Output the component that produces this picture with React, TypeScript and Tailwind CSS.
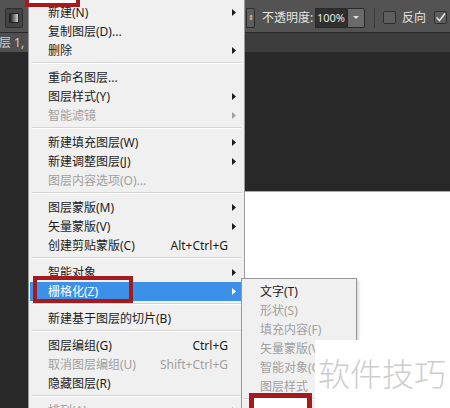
import React from 'react';

type Item =
  | 'sep'
  | { label: string; keys?: string; sub?: boolean; off?: boolean; active?: boolean };

const layerMenu: Item[] = [
  { label: '新建(N)', sub: true },
  { label: '复制图层(D)...' },
  { label: '删除', sub: true },
  'sep',
  { label: '重命名图层...' },
  { label: '图层样式(Y)', sub: true },
  { label: '智能滤镜', sub: true, off: true },
  'sep',
  { label: '新建填充图层(W)', sub: true },
  { label: '新建调整图层(J)', sub: true },
  { label: '图层内容选项(O)...', off: true },
  'sep',
  { label: '图层蒙版(M)', sub: true },
  { label: '矢量蒙版(V)', sub: true },
  { label: '创建剪贴蒙版(C)', keys: 'Alt+Ctrl+G' },
  'sep',
  { label: '智能对象', sub: true },
  { label: '栅格化(Z)', sub: true, active: true },
  'sep',
  { label: '新建基于图层的切片(B)' },
  'sep',
  { label: '图层编组(G)', keys: 'Ctrl+G' },
  { label: '取消图层编组(U)', keys: 'Shift+Ctrl+G', off: true },
  { label: '隐藏图层(R)' },
  'sep',
  { label: '排列(A)', sub: true, off: true },
];

const rasterMenu: Item[] = [
  { label: '文字(T)' },
  { label: '形状(S)', off: true },
  { label: '填充内容(F)', off: true },
  { label: '矢量蒙版(V)', off: true },
  { label: '智能对象(O)', off: true },
  { label: '图层样式', off: true },
  'sep',
  { label: '图层(L)' },
];

const Arrow = () => (
  <svg width="4" height="7" viewBox="0 0 4 7" className="block">
    <polygon points="0,0 4,3.5 0,7" fill="currentColor" />
  </svg>
);

const MenuRows = ({ items }: { items: Item[] }) => (
  <>
    {items.map((item, i) =>
      item === 'sep' ? (
        <div key={i} className="h-[8px] px-[2px] pt-[2px]">
          <div className="h-px bg-[#d4d4d4]" />
          <div className="h-px bg-white" />
        </div>
      ) : (
        <div
          key={i}
          className={`flex h-[19px] items-center pl-[18px] ${
            item.active ? 'bg-[#3c90e8] text-white' : item.off ? 'text-[#a0a0a0]' : 'text-[#1c1c1c]'
          }`}
        >
          <span className="flex-1 whitespace-nowrap">{item.label}</span>
          {item.keys && <span className="whitespace-nowrap">{item.keys}</span>}
          <span className="w-[15px] pl-[4px]">{item.sub && <Arrow />}</span>
        </div>
      )
    )}
  </>
);

const Checkbox = ({ checked }: { checked?: boolean }) => (
  <div className="flex h-[13px] w-[13px] items-center justify-center rounded-[2px] border border-[#2e2e2e] bg-[#5e5e5e]">
    {checked && (
      <svg width="11" height="11" viewBox="0 0 11 11">
        <path d="M1.5 5.5 L4.5 8.5 L10 1.5" stroke="#e8e8e8" strokeWidth="1.5" fill="none" />
      </svg>
    )}
  </div>
);

export default function App() {
  return (
    <div className="relative h-[408px] w-[450px] overflow-hidden bg-[#282828] font-['Noto_Sans','Noto_Sans_CJK_SC',sans-serif] text-[12px] leading-none">
      {/* Options bar */}
      <div className="flex h-[33px] items-center border-b border-[#2a2a2a] bg-[#535353] pt-[3px]">
        <div className="ml-[5px] flex h-[20px] w-[18px] items-center justify-center rounded-[2px] border border-[#2c2c2c] bg-[#444]">
          <div className="h-[10px] w-[10px] border border-[#222] bg-gradient-to-r from-[#1e1e1e] to-[#d8d8d8]" />
        </div>
        <div className="ml-[223px] flex h-[20px] w-[9px] items-center justify-center rounded-r-[2px] border border-[#2c2c2c] bg-[#5c5c5c] text-[7px] text-[#ddd]">
          ⇕
        </div>
        <span className="ml-[7px] w-[52px] whitespace-nowrap text-[#e4e4e4]">不透明度:</span>
        <div className="ml-[1px] flex h-[20px] w-[32px] items-center justify-center border border-[#2a2a2a] bg-[#2f2f2f] text-[11px] text-[#e6e6e6]">
          100%
        </div>
        <div className="flex h-[20px] w-[18px] items-center justify-center rounded-r-[2px] border border-[#2a2a2a] bg-[#6a6a6a]">
          <div className="h-0 w-0 border-x-[3px] border-t-[3px] border-x-transparent border-t-[#e0e0e0]" />
        </div>
        <div className="ml-[9px] h-[20px] w-px bg-[#3a3a3a]" />
        <div className="ml-[8px]">
          <Checkbox />
        </div>
        <span className="ml-[6px] w-[24px] whitespace-nowrap text-[#e4e4e4]">反向</span>
        <div className="ml-[8px]">
          <Checkbox checked />
        </div>
      </div>

      {/* Document tab row */}
      <div className="flex h-[19px] bg-[#3c3c3c]">
        <div className="flex w-[28px] items-center overflow-hidden bg-[#4f4f4f]">
          <span className="ml-[-13px] whitespace-nowrap text-[#cfcfcf]">图层 1, RGB/8</span>
        </div>
      </div>

      {/* Canvas area */}
      <div className="flex h-[356px]">
        <div className="w-[28px] bg-[#282828]" />
        <div className="flex flex-1 flex-col">
          <div className="h-[139px] bg-[#282828]" />
          <div className="h-px bg-[#a8a8a8]" />
          <div className="flex-1 bg-white" />
        </div>
      </div>

      {/* Layer menu */}
      <div className="absolute left-[28px] top-0 w-[217px] border-x border-[#9a9a9a] bg-[#f0f0f0] px-[1px] pb-[3px] pt-[3px]">
        <MenuRows items={layerMenu} />
      </div>

      {/* Rasterize submenu */}
      <div className="absolute left-[241px] top-[278px] w-[116px] border border-[#979797] bg-[#f0f0f0] py-[3px] shadow-[2px_2px_2px_rgba(0,0,0,0.15)]">
        <MenuRows items={rasterMenu} />
      </div>

      {/* Watermark */}
      <div className="absolute left-[315px] top-[340px] h-[68px] w-[135px] bg-white pl-[3px] pt-[18px]">
        <span className="whitespace-nowrap text-[32px] font-extralight text-[#cdcdcd]">软件技巧</span>
      </div>

      {/* Callout boxes */}
      <div className="absolute left-[25px] top-[-13px] h-[20px] w-[55px] border-[4px] border-[#a51a1c] bg-white" />
      <div className="absolute left-[33px] top-[276px] h-[27px] w-[100px] border-[4px] border-[#a51a1c]" />
      <div className="absolute left-[249px] top-[393px] h-[24px] w-[63px] border-[5px] border-[#a51a1c] bg-white" />
    </div>
  );
}
